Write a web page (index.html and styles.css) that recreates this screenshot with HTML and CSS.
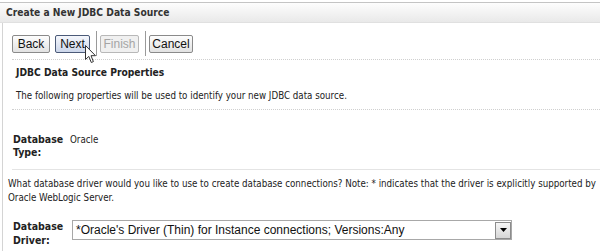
FILE: index.html
```html
<!DOCTYPE html>
<html lang="en">
<head>
    <meta charset="UTF-8">
    <title>Create a New JDBC Data Source</title>
    <link rel="stylesheet" href="styles.css">
</head>
<body>
    <div class="wizard">
        <div class="wizard-title">Create a New JDBC Data Source</div>

        <div class="wizard-body">
            <!-- Navigation buttons -->
            <div class="button-bar">
                <button class="btn btn-back">Back</button>
                <button class="btn btn-next btn-active">Next</button>
                <span class="bar-sep"></span>
                <button class="btn btn-finish" disabled>Finish</button>
                <span class="bar-sep"></span>
                <button class="btn btn-cancel">Cancel</button>
                <svg class="cursor" width="12" height="19" viewBox="0 0 12 19">
                    <path d="M0.5 0.5 L0.5 14.5 L3.8 11.4 L6.3 17.5 L8.4 16.6 L6 10.7 L10.5 10.7 Z" fill="#fff" stroke="#333" stroke-width="1"/>
                </svg>
            </div>

            <div class="section">
                <h2 class="section-title">JDBC Data Source Properties</h2>
                <p class="section-text">The following properties will be used to identify your new JDBC data source.</p>
            </div>

            <div class="field-row">
                <div class="field-label">Database<br>Type:</div>
                <div class="field-value">Oracle</div>
            </div>

            <div class="question">
                What database driver would you like to use to create database connections? Note: * indicates that the driver is explicitly supported by Oracle WebLogic Server.
            </div>

            <div class="field-row field-driver">
                <div class="field-label">Database<br>Driver:</div>
                <div class="select-box">
                    <span class="select-text">*Oracle's Driver (Thin) for Instance connections; Versions:Any</span>
                    <span class="select-arrow">
                        <svg width="7" height="4" viewBox="0 0 7 4"><path d="M0 0 H7 L3.5 4 Z" fill="#000"/></svg>
                    </span>
                </div>
            </div>
        </div>
    </div>
</body>
</html>
```

FILE: styles.css
```css
/* Base */
body {
    margin: 0;
    background: #fff;
    font-family: "DejaVu Sans Condensed", "DejaVu Sans", sans-serif;
    font-size: 9.7px;
    color: #222;
    overflow: hidden;
}

.wizard {
    border-top: 1px solid #c4c4c4;
    margin-top: 2px;
}

.wizard-title {
    height: 19px;
    line-height: 19px;
    padding-left: 6px;
    font-weight: bold;
    font-size: 10.2px;
    color: #333;
    background: linear-gradient(#fdfdfd, #e9e9e9);
    border-bottom: 1px solid #e0e0e0;
}

.wizard-body {
    margin-left: 2px;
    border-left: 1px solid #d4d4d4;
    height: 229px;
}

/* Button bar */
.button-bar {
    display: flex;
    align-items: center;
    position: relative;
    height: 18px;
    margin-left: 9px;
    padding: 12px 0 6px;
    border-bottom: 1px dotted #cfcfcf;
}

.btn {
    font-family: "Liberation Sans", Arial, sans-serif;
    font-size: 12px;
    height: 18px;
    padding: 0;
    background: linear-gradient(#fdfdfd, #e2e2e2);
    border: 1px solid #8a8a8a;
    border-radius: 2px;
    color: #111;
}

.btn-back { width: 38px; }
.btn-next { width: 35px; margin-left: 5px; }
.btn-finish { width: 39px; margin-left: 3px; }
.btn-cancel { width: 44px; margin-left: 3px; }

.btn-active {
    background: linear-gradient(#f5f7fc, #ccd6ea);
    border-color: #4b5a78;
}

.btn[disabled] {
    color: #a5a5a5;
    border-color: #b8b8b8;
    background: #f0f0f0;
}

.bar-sep {
    width: 1px;
    height: 25px;
    margin: -4px 0 -3px 6px;
    background: #9a9a9a;
}

.cursor {
    position: absolute;
    left: 73px;
    top: 22px;
}

/* Properties section */
.section {
    margin-left: 9px;
    border-bottom: 1px dotted #cfcfcf;
}

.section-title {
    margin: 0;
    padding: 6px 0 0 4px;
    font-size: 10.2px;
    font-weight: bold;
    line-height: 14px;
}

.section-text {
    margin: 0;
    padding: 9px 0 6px 4px;
    line-height: 14px;
}

/* Fields */
.field-row {
    display: flex;
    margin-left: 9px;
    padding: 23px 0 10px 1px;
    border-bottom: 1px solid #e4e4e4;
    line-height: 13px;
}

.field-label {
    flex-shrink: 0;
    width: 57px;
    font-size: 10.5px;
    font-weight: bold;
}

.question {
    padding: 7px 0 0 5px;
    line-height: 14px;
}

.field-driver {
    padding-top: 14px;
    line-height: 14px;
    border-bottom: none;
}

.field-driver .field-label {
    width: 59px;
}

.select-box {
    display: flex;
    align-items: center;
    width: 435px;
    height: 18px;
    margin-top: 1px;
    padding-left: 3px;
    border: 1px solid #a8a8a8;
}

.select-text {
    flex: 1;
    font-family: "Liberation Sans", Arial, sans-serif;
    font-size: 12px;
    color: #111;
}

.select-arrow {
    display: flex;
    align-items: center;
    justify-content: center;
    width: 14px;
    height: 15px;
    border: 1px solid #8c8c8c;
    background: linear-gradient(#f6f6f6, #d6d6d6);
}
```
